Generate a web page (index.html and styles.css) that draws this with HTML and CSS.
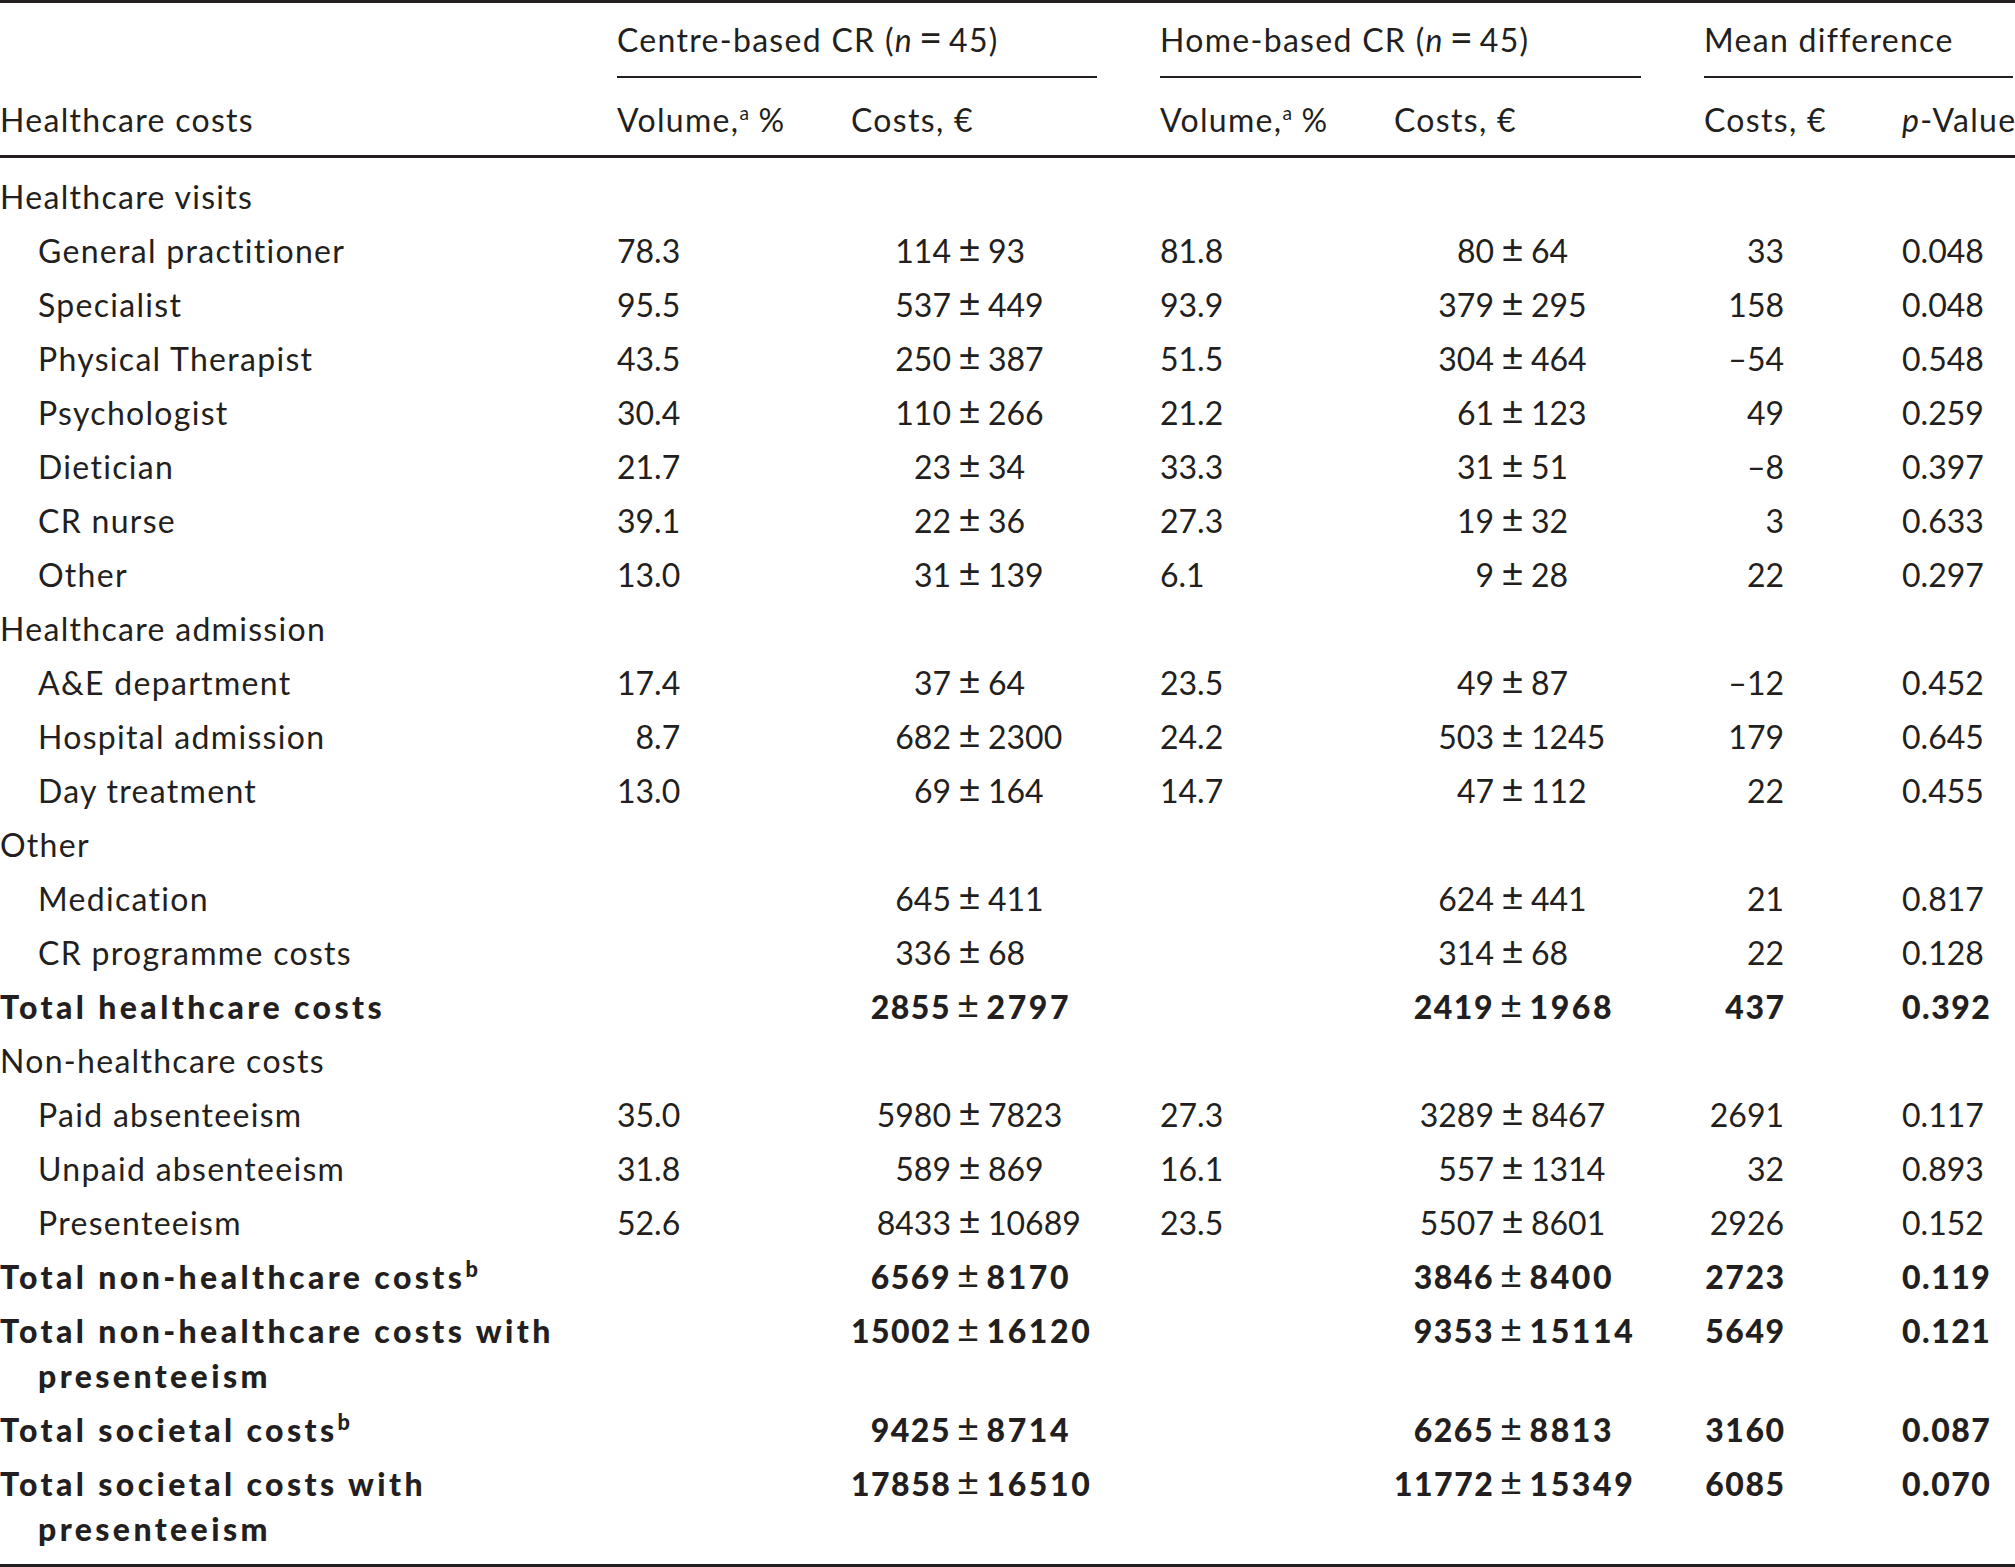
FILE: index.html
```html
<!DOCTYPE html>
<html lang="en">
<head>
<meta charset="utf-8">
<title>Healthcare costs</title>
<link rel="stylesheet" href="styles.css">
</head>
<body>
<table class="costs">
  <colgroup>
    <col class="c-label">
    <col class="c-vol">
    <col class="c-cost">
    <col class="c-vol">
    <col class="c-cost2">
    <col class="c-md">
    <col class="c-p">
  </colgroup>
  <thead>
    <tr class="h1">
      <th></th>
      <th colspan="2"><div class="grp">Centre-based CR (<i>n</i><span class="eq">=</span>45)</div></th>
      <th colspan="2"><div class="grp">Home-based CR (<i>n</i><span class="eq">=</span>45)</div></th>
      <th colspan="2"><div class="grp last">Mean difference</div></th>
    </tr>
    <tr class="h2">
      <th>Healthcare costs</th>
      <th>Volume,<sup>a</sup> %</th>
      <th>Costs, €</th>
      <th>Volume,<sup>a</sup> %</th>
      <th>Costs, €</th>
      <th>Costs, €</th>
      <th><i>p</i>-Value</th>
    </tr>
  </thead>
  <tbody>
    <tr class="first"><td class="lab">Healthcare visits</td><td></td><td></td><td></td><td></td><td></td><td></td></tr>
    <tr><td class="lab ind">General practitioner</td><td>78.3</td><td class="pm"><span class="l">114</span><span class="s">±</span><span class="r">93</span></td><td>81.8</td><td class="pm"><span class="l">80</span><span class="s">±</span><span class="r">64</span></td><td class="md">33</td><td>0.048</td></tr>
    <tr><td class="lab ind">Specialist</td><td>95.5</td><td class="pm"><span class="l">537</span><span class="s">±</span><span class="r">449</span></td><td>93.9</td><td class="pm"><span class="l">379</span><span class="s">±</span><span class="r">295</span></td><td class="md">158</td><td>0.048</td></tr>
    <tr><td class="lab ind">Physical Therapist</td><td>43.5</td><td class="pm"><span class="l">250</span><span class="s">±</span><span class="r">387</span></td><td>51.5</td><td class="pm"><span class="l">304</span><span class="s">±</span><span class="r">464</span></td><td class="md">–54</td><td>0.548</td></tr>
    <tr><td class="lab ind">Psychologist</td><td>30.4</td><td class="pm"><span class="l">110</span><span class="s">±</span><span class="r">266</span></td><td>21.2</td><td class="pm"><span class="l">61</span><span class="s">±</span><span class="r">123</span></td><td class="md">49</td><td>0.259</td></tr>
    <tr><td class="lab ind">Dietician</td><td>21.7</td><td class="pm"><span class="l">23</span><span class="s">±</span><span class="r">34</span></td><td>33.3</td><td class="pm"><span class="l">31</span><span class="s">±</span><span class="r">51</span></td><td class="md">–8</td><td>0.397</td></tr>
    <tr><td class="lab ind">CR nurse</td><td>39.1</td><td class="pm"><span class="l">22</span><span class="s">±</span><span class="r">36</span></td><td>27.3</td><td class="pm"><span class="l">19</span><span class="s">±</span><span class="r">32</span></td><td class="md">3</td><td>0.633</td></tr>
    <tr><td class="lab ind">Other</td><td>13.0</td><td class="pm"><span class="l">31</span><span class="s">±</span><span class="r">139</span></td><td>6.1</td><td class="pm"><span class="l">9</span><span class="s">±</span><span class="r">28</span></td><td class="md">22</td><td>0.297</td></tr>
    <tr><td class="lab">Healthcare admission</td><td></td><td></td><td></td><td></td><td></td><td></td></tr>
    <tr><td class="lab ind">A&amp;E department</td><td>17.4</td><td class="pm"><span class="l">37</span><span class="s">±</span><span class="r">64</span></td><td>23.5</td><td class="pm"><span class="l">49</span><span class="s">±</span><span class="r">87</span></td><td class="md">–12</td><td>0.452</td></tr>
    <tr><td class="lab ind">Hospital admission</td><td>&#8199;8.7</td><td class="pm"><span class="l">682</span><span class="s">±</span><span class="r">2300</span></td><td>24.2</td><td class="pm"><span class="l">503</span><span class="s">±</span><span class="r">1245</span></td><td class="md">179</td><td>0.645</td></tr>
    <tr><td class="lab ind">Day treatment</td><td>13.0</td><td class="pm"><span class="l">69</span><span class="s">±</span><span class="r">164</span></td><td>14.7</td><td class="pm"><span class="l">47</span><span class="s">±</span><span class="r">112</span></td><td class="md">22</td><td>0.455</td></tr>
    <tr><td class="lab">Other</td><td></td><td></td><td></td><td></td><td></td><td></td></tr>
    <tr><td class="lab ind">Medication</td><td></td><td class="pm"><span class="l">645</span><span class="s">±</span><span class="r">411</span></td><td></td><td class="pm"><span class="l">624</span><span class="s">±</span><span class="r">441</span></td><td class="md">21</td><td>0.817</td></tr>
    <tr><td class="lab ind">CR programme costs</td><td></td><td class="pm"><span class="l">336</span><span class="s">±</span><span class="r">68</span></td><td></td><td class="pm"><span class="l">314</span><span class="s">±</span><span class="r">68</span></td><td class="md">22</td><td>0.128</td></tr>
    <tr class="total"><td class="lab">Total healthcare costs</td><td></td><td class="pm"><span class="l">2855</span><span class="s">±</span><span class="r">2797</span></td><td></td><td class="pm"><span class="l">2419</span><span class="s">±</span><span class="r">1968</span></td><td class="md">437</td><td>0.392</td></tr>
    <tr><td class="lab">Non-healthcare costs</td><td></td><td></td><td></td><td></td><td></td><td></td></tr>
    <tr><td class="lab ind">Paid absenteeism</td><td>35.0</td><td class="pm"><span class="l">5980</span><span class="s">±</span><span class="r">7823</span></td><td>27.3</td><td class="pm"><span class="l">3289</span><span class="s">±</span><span class="r">8467</span></td><td class="md">2691</td><td>0.117</td></tr>
    <tr><td class="lab ind">Unpaid absenteeism</td><td>31.8</td><td class="pm"><span class="l">589</span><span class="s">±</span><span class="r">869</span></td><td>16.1</td><td class="pm"><span class="l">557</span><span class="s">±</span><span class="r">1314</span></td><td class="md">32</td><td>0.893</td></tr>
    <tr><td class="lab ind">Presenteeism</td><td>52.6</td><td class="pm"><span class="l">8433</span><span class="s">±</span><span class="r">10689</span></td><td>23.5</td><td class="pm"><span class="l">5507</span><span class="s">±</span><span class="r">8601</span></td><td class="md">2926</td><td>0.152</td></tr>
    <tr class="total"><td class="lab">Total non-healthcare costs<sup>b</sup></td><td></td><td class="pm"><span class="l">6569</span><span class="s">±</span><span class="r">8170</span></td><td></td><td class="pm"><span class="l">3846</span><span class="s">±</span><span class="r">8400</span></td><td class="md">2723</td><td>0.119</td></tr>
    <tr class="total"><td class="lab hang">Total non-healthcare costs with<br>presenteeism</td><td></td><td class="pm"><span class="l">15002</span><span class="s">±</span><span class="r">16120</span></td><td></td><td class="pm"><span class="l">9353</span><span class="s">±</span><span class="r">15114</span></td><td class="md">5649</td><td>0.121</td></tr>
    <tr class="total"><td class="lab">Total societal costs<sup>b</sup></td><td></td><td class="pm"><span class="l">9425</span><span class="s">±</span><span class="r">8714</span></td><td></td><td class="pm"><span class="l">6265</span><span class="s">±</span><span class="r">8813</span></td><td class="md">3160</td><td>0.087</td></tr>
    <tr class="total lastrow"><td class="lab hang">Total societal costs with<br>presenteeism</td><td></td><td class="pm"><span class="l">17858</span><span class="s">±</span><span class="r">16510</span></td><td></td><td class="pm"><span class="l">11772</span><span class="s">±</span><span class="r">15349</span></td><td class="md">6085</td><td>0.070</td></tr>
  </tbody>
</table>
</body>
</html>
```

FILE: styles.css
```css
html, body {
  margin: 0;
  padding: 0;
  background: #ffffff;
  overflow: hidden;
}

body {
  font-family: "Lato", "Open Sans", "Liberation Sans", sans-serif;
  font-size: 32px;
  color: #231f20;
}

.costs {
  width: 2015px;
  table-layout: fixed;
  border-collapse: separate;
  border-spacing: 0;
  border-top: 3px solid #231f20;
  border-bottom: 3px solid #231f20;
}

.c-label { width: 617px; }
.c-vol { width: 234px; }
.c-cost { width: 309px; }
.c-cost2 { width: 310px; }
.c-md { width: 198px; }
.c-p { width: 113px; }

.costs th,
.costs td {
  padding: 5px 0 4px 0;
  line-height: 45px;
  text-align: left;
  font-weight: 400;
  white-space: nowrap;
  vertical-align: top;
}

.costs th {
  letter-spacing: 1.3px;
}

.lab {
  letter-spacing: 1.3px;
}

.costs thead .h1 th {
  padding-top: 14px;
  padding-bottom: 0;
}

.grp {
  padding-bottom: 14px;
  border-bottom: 2px solid #231f20;
  margin-right: 63px;
}

.grp.last {
  margin-right: 2px;
}

.eq {
  display: inline-block;
  width: 33px;
  text-align: center;
  font-size: 40px;
  line-height: 30px;
  letter-spacing: 0;
  margin-left: 1px;
  margin-right: 2px;
}

.costs thead .h2 th {
  padding-top: 19px;
  padding-bottom: 13px;
  border-bottom: 3px solid #231f20;
}

.costs tbody .first td {
  padding-top: 16px;
}

.costs tbody .lastrow td {
  padding-bottom: 13px;
}

.ind {
  padding-left: 38px !important;
}

.hang {
  padding-left: 38px !important;
  text-indent: -38px;
}

.pm .l {
  display: inline-block;
  width: 100px;
  text-align: right;
}

.pm .s {
  display: inline-block;
  width: 37px;
  text-align: center;
  font-weight: 400;
  font-size: 38px;
  line-height: 38px;
  letter-spacing: 0;
}

.md {
  text-align: right !important;
  padding-right: 118px !important;
}

.total td {
  font-weight: 900;
  letter-spacing: 1.5px;
}

.total td.lab {
  letter-spacing: 3.4px;
}

.total .pm .l {
  margin-right: -1.5px;
}

.total .pm .r {
  letter-spacing: 2.6px;
}

.total .md {
  padding-right: 116.5px !important;
}

sup {
  font-size: 0.6em;
  line-height: 0;
  vertical-align: 0.6em;
  letter-spacing: 0;
}

.total sup {
  font-size: 0.68em;
  vertical-align: 0.55em;
}

i {
  font-style: italic;
}
```
